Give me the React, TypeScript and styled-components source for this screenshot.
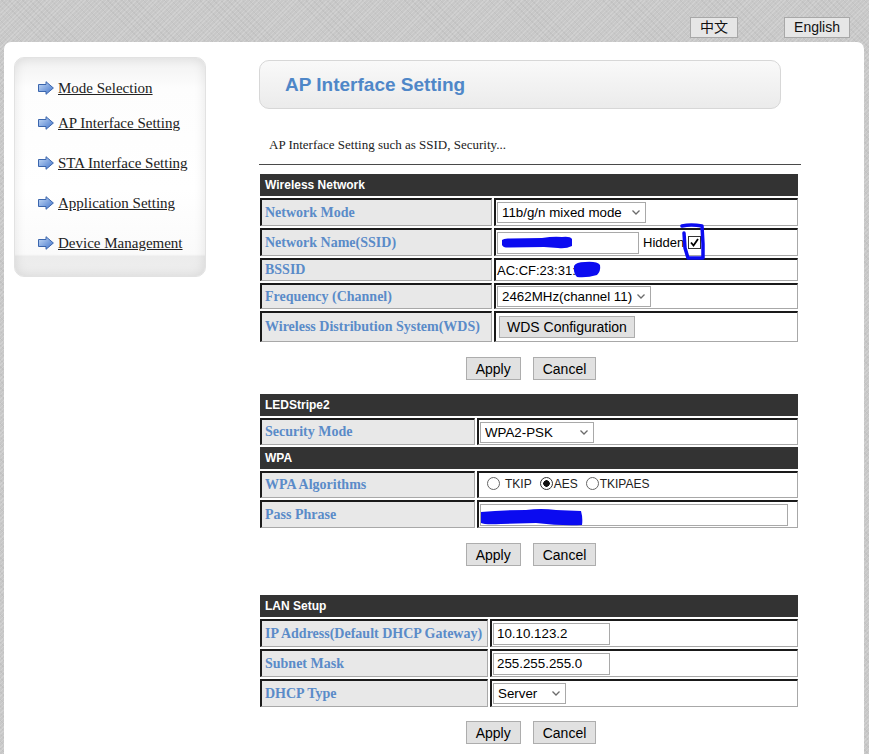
import React from "react";
import styled, { createGlobalStyle } from "styled-components";

const GlobalStyle = createGlobalStyle`
  html, body {
    margin: 0;
    padding: 0;
  }
  body {
    background-color: #c8c8c8;
    background-image:
      repeating-linear-gradient(135deg, rgba(255, 255, 255, 0.16) 0 1px, transparent 1px 3px),
      repeating-linear-gradient(45deg, rgba(0, 0, 0, 0.035) 0 1px, transparent 1px 5px);
    font-family: "Liberation Sans", Arial, sans-serif;
  }
`;

const TopBar = styled.div`
  display: flex;
  justify-content: flex-end;
  gap: 46px;
  height: 21px;
  padding: 17px 19px 4px 0;
`;

const LangButton = styled.button`
  height: 21px;
  padding: 0 9px;
  border: 1px solid #a8a8a8;
  background: #e6e6e6;
  color: #111;
  font: 14px "Liberation Sans", "Noto Sans CJK SC", sans-serif;
  line-height: 19px;
`;

const Shell = styled.div`
  display: flex;
  align-items: flex-start;
  margin: 0 5px 0 4px;
  min-height: calc(100vh - 42px);
  background: #fff;
  border-radius: 7px 7px 0 0;
`;

const Sidebar = styled.nav`
  box-sizing: border-box;
  width: 192px;
  height: 220px;
  margin: 15px 0 0 10px;
  padding: 21px 0 0 23px;
  border: 1px solid #e2e2e2;
  border-radius: 10px;
  background: linear-gradient(#f1f1f1, #fdfdfd 14%, #ffffff 60%, #fafafa 90%, #ececec 91%, #eeeeee);
  box-shadow: inset 0 0 12px rgba(0, 0, 0, 0.1);
`;

const NavList = styled.ul`
  display: flex;
  flex-direction: column;
  gap: 22px;
  margin: 0;
  padding: 0;
  list-style: none;
`;

const NavItem = styled.li`
  display: flex;
  align-items: center;
  gap: 4px;
  height: 18px;

  &:first-child {
    margin-bottom: -5px;
  }
`;

const NavLink = styled.a`
  color: #222;
  font: 15px "Liberation Serif", "Times New Roman", serif;
  text-decoration: underline;
  white-space: nowrap;
`;

const Main = styled.main`
  width: 542px;
  margin-left: 53px;
  padding-bottom: 12px;
`;

const TitleBox = styled.div`
  box-sizing: border-box;
  display: flex;
  align-items: center;
  width: 522px;
  height: 49px;
  margin-top: 18px;
  padding-left: 25px;
  border: 1px solid #d7d7d7;
  border-radius: 10px;
  background: linear-gradient(#f9f9f9, #ebebeb);
`;

const Title = styled.h1`
  margin: 0;
  color: #4f87c8;
  font: bold 19px "Liberation Sans", Arial, sans-serif;
`;

const Description = styled.p`
  margin: 28px 0 0 10px;
  color: #222;
  font: 13px "Liberation Serif", "Times New Roman", serif;
  line-height: 16px;
`;

const Divider = styled.div`
  width: 542px;
  margin-top: 11px;
  border-top: 1px solid #4a4a4a;
`;

const FormTable = styled.table<{ $top: number }>`
  width: 542px;
  margin: ${(p) => p.$top}px 0 0 -1px;
  border-collapse: separate;
  border-spacing: 2px;
`;

const Row = styled.tr<{ $h: number }>`
  height: ${(p) => p.$h}px;
`;

const HeadCell = styled.td`
  height: 22px;
  padding: 0 5px;
  background: #333;
  color: #fff;
  font: bold 12px "Liberation Sans", Arial, sans-serif;
`;

const LabelCell = styled.td<{ $w: number }>`
  box-sizing: border-box;
  width: ${(p) => p.$w}px;
  padding: 0 3px;
  border-style: solid;
  border-width: 2px 1px 1px 2px;
  border-color: #1a1a1a #a8a8a8 #a8a8a8 #1a1a1a;
  background: #e8e8e8;
  color: #5a8bc8;
  font: bold 14px "Liberation Serif", "Times New Roman", serif;
  white-space: nowrap;
`;

const ValueCell = styled.td`
  box-sizing: border-box;
  padding: 0 3px 0 1px;
  border-style: solid;
  border-width: 2px 1px 1px 2px;
  border-color: #1a1a1a #a8a8a8 #a8a8a8 #1a1a1a;
  background: #fff;
  color: #000;
  font: 13px "Liberation Sans", Arial, sans-serif;
  vertical-align: middle;
`;

const Inline = styled.div`
  display: flex;
  align-items: center;
  gap: 4px;
`;

const Holder = styled.span`
  position: relative;
  display: inline-block;
  vertical-align: middle;
`;

const Select = styled.select<{ $w: number }>`
  appearance: none;
  box-sizing: border-box;
  width: ${(p) => p.$w}px;
  height: 21px;
  padding: 0 18px 0 4px;
  border: 1px solid #a9a9a9;
  border-radius: 0;
  background: #fff;
  color: #000;
  font: 13.333px "Liberation Sans", Arial, sans-serif;
`;

const Chevron = styled.svg`
  position: absolute;
  top: 8px;
  right: 6px;
  pointer-events: none;
`;

const TextInput = styled.input<{ $w: number }>`
  box-sizing: border-box;
  width: ${(p) => p.$w}px;
  height: 22px;
  padding: 0 3px;
  border: 1px solid #a9a9a9;
  background: #fff;
  color: #000;
  font: 13.333px "Liberation Sans", Arial, sans-serif;
`;

const CheckBox = styled.span`
  display: inline-flex;
  align-items: center;
  justify-content: center;
  box-sizing: border-box;
  width: 13px;
  height: 13px;
  border: 1px solid #333;
  background: #fff;
`;

const Radio = styled.input<{ $gap: number }>`
  appearance: none;
  box-sizing: border-box;
  width: 13px;
  height: 13px;
  margin: 0 ${(p) => p.$gap}px 0 0;
  border: 1px solid #666;
  border-radius: 50%;
  background: #fff;

  &:checked {
    background: radial-gradient(circle, #111 0 3px, #fff 3.5px);
    border-color: #333;
  }
`;

const RadioLabel = styled.label`
  display: inline-flex;
  align-items: center;
  margin-right: 8px;
  color: #222;
  font: 12px "Liberation Sans", Arial, sans-serif;

  &:first-child {
    margin-left: 7px;
  }
`;

const Scribble = styled.svg<{ $x: number; $y: number }>`
  position: absolute;
  left: ${(p) => p.$x}px;
  top: ${(p) => p.$y}px;
  overflow: visible;
  pointer-events: none;
`;

const Actions = styled.div<{ $top: number }>`
  display: flex;
  justify-content: center;
  gap: 12px;
  margin: ${(p) => p.$top}px 0 0 2px;
`;

const Button = styled.button`
  height: 23px;
  padding: 0 9px;
  border: 1px solid #adadad;
  background: #e1e1e1;
  color: #000;
  font: 14px "Liberation Sans", Arial, sans-serif;
`;

const WdsButton = styled(Button)`
  height: 22px;
  margin-left: 2px;
  padding: 0 7px;
`;

function Arrow() {
  return (
    <svg width="16" height="14" viewBox="0 0 16 14">
      <defs>
        <linearGradient id="navArrow" x1="0" y1="0" x2="1" y2="1">
          <stop offset="0" stopColor="#c7dcf7" />
          <stop offset="1" stopColor="#3f72c9" />
        </linearGradient>
      </defs>
      <path
        d="M0.5 3.5 H8 V0.7 L15.4 7 L8 13.3 V10.5 H0.5 Z"
        fill="url(#navArrow)"
        stroke="#3a65ad"
        strokeWidth="1"
        strokeLinejoin="round"
      />
    </svg>
  );
}

function Dropdown(props: { width: number; value: string }) {
  return (
    <Holder>
      <Select $w={props.width} defaultValue={props.value}>
        <option>{props.value}</option>
      </Select>
      <Chevron width="8" height="5" viewBox="0 0 8 5">
        <path d="M0.5 0.5 L4 4 L7.5 0.5" fill="none" stroke="#6b6b6b" strokeWidth="1.3" />
      </Chevron>
    </Holder>
  );
}

const navItems = [
  "Mode Selection",
  "AP Interface Setting",
  "STA Interface Setting",
  "Application Setting",
  "Device Management",
];

export default function App() {
  return (
    <>
      <GlobalStyle />
      <TopBar>
        <LangButton>中文</LangButton>
        <LangButton>English</LangButton>
      </TopBar>
      <Shell>
        <Sidebar>
          <NavList>
            {navItems.map((item) => (
              <NavItem key={item}>
                <Arrow />
                <NavLink href="#">{item}</NavLink>
              </NavItem>
            ))}
          </NavList>
        </Sidebar>

        <Main>
          <TitleBox>
            <Title>AP Interface Setting</Title>
          </TitleBox>
          <Description>AP Interface Setting such as SSID, Security...</Description>
          <Divider />

          <FormTable $top={7}>
            <tbody>
              <tr>
                <HeadCell colSpan={2}>Wireless Network</HeadCell>
              </tr>
              <Row $h={28}>
                <LabelCell $w={232}>Network Mode</LabelCell>
                <ValueCell>
                  <Dropdown width={149} value="11b/g/n mixed mode" />
                </ValueCell>
              </Row>
              <Row $h={28}>
                <LabelCell $w={232}>Network Name(SSID)</LabelCell>
                <ValueCell>
                  <Inline>
                    <Holder>
                      <TextInput $w={142} defaultValue="" />
                      <Scribble $x={5} $y={4} width="70" height="13" viewBox="0 0 70 13">
                        <path
                          d="M0 4 Q2 2 8 2.5 L40 2 Q52 0 60 1 Q68 0 70 3 L70 10 Q64 13 56 12 L42 11 L8 11.5 Q1 12 0 9 Z"
                          fill="#0b0bf0"
                        />
                      </Scribble>
                    </Holder>
                    <span>Hidden</span>
                    <Holder>
                      <CheckBox>
                        <svg width="9" height="9" viewBox="0 0 9 9">
                          <path d="M1 4.5 L3.5 7.5 L8 1" fill="none" stroke="#000" strokeWidth="1.8" />
                        </svg>
                      </CheckBox>
                      <Scribble $x={-7} $y={-11} width="24" height="36" viewBox="0 0 24 36">
                        <path
                          d="M1 2 Q10 0 21 2 L22 20 L22 34 L7 34 L4 24 L3 9"
                          fill="none"
                          stroke="#0b0bf0"
                          strokeWidth="3.5"
                          strokeLinecap="round"
                          strokeLinejoin="round"
                        />
                      </Scribble>
                    </Holder>
                  </Inline>
                </ValueCell>
              </Row>
              <Row $h={23}>
                <LabelCell $w={232}>BSSID</LabelCell>
                <ValueCell>
                  <Holder>
                    AC:CF:23:31:
                    <Scribble $x={76} $y={-2} width="28" height="17" viewBox="0 0 28 17">
                      <path
                        d="M1 5 Q3 1 12 1 Q24 0 27 4 Q28 10 24 14 Q14 17 4 16 Q0 12 1 5 Z"
                        fill="#0b0bf0"
                      />
                    </Scribble>
                  </Holder>
                </ValueCell>
              </Row>
              <Row $h={26}>
                <LabelCell $w={232}>Frequency (Channel)</LabelCell>
                <ValueCell>
                  <Dropdown width={154} value="2462MHz(channel 11)" />
                </ValueCell>
              </Row>
              <Row $h={31}>
                <LabelCell $w={232}>Wireless Distribution System(WDS)</LabelCell>
                <ValueCell>
                  <WdsButton>WDS Configuration</WdsButton>
                </ValueCell>
              </Row>
            </tbody>
          </FormTable>

          <Actions $top={13}>
            <Button>Apply</Button>
            <Button>Cancel</Button>
          </Actions>

          <FormTable $top={12}>
            <tbody>
              <tr>
                <HeadCell colSpan={2}>LEDStripe2</HeadCell>
              </tr>
              <Row $h={27}>
                <LabelCell $w={215}>Security Mode</LabelCell>
                <ValueCell>
                  <Dropdown width={114} value="WPA2-PSK" />
                </ValueCell>
              </Row>
              <tr>
                <HeadCell colSpan={2}>WPA</HeadCell>
              </tr>
              <Row $h={27}>
                <LabelCell $w={215}>WPA Algorithms</LabelCell>
                <ValueCell>
                  <RadioLabel>
                    <Radio type="radio" name="algo" $gap={5} />
                    TKIP
                  </RadioLabel>
                  <RadioLabel>
                    <Radio type="radio" name="algo" $gap={1} defaultChecked />
                    AES
                  </RadioLabel>
                  <RadioLabel>
                    <Radio type="radio" name="algo" $gap={1} />
                    TKIPAES
                  </RadioLabel>
                </ValueCell>
              </Row>
              <Row $h={28}>
                <LabelCell $w={215}>Pass Phrase</LabelCell>
                <ValueCell>
                  <Holder>
                    <TextInput $w={308} defaultValue="" />
                    <Scribble $x={1} $y={5} width="102" height="17" viewBox="0 0 102 17">
                      <path
                        d="M0 3 Q20 1 45 1 Q60 -1 75 1 L100 2 Q102 9 101 16 Q80 17 55 14 L20 15 Q4 16 0 14 Z"
                        fill="#0b0bf0"
                      />
                    </Scribble>
                  </Holder>
                </ValueCell>
              </Row>
            </tbody>
          </FormTable>

          <Actions $top={13}>
            <Button>Apply</Button>
            <Button>Cancel</Button>
          </Actions>

          <FormTable $top={27}>
            <tbody>
              <tr>
                <HeadCell colSpan={2}>LAN Setup</HeadCell>
              </tr>
              <Row $h={28}>
                <LabelCell $w={228}>IP Address(Default DHCP Gateway)</LabelCell>
                <ValueCell>
                  <TextInput $w={117} defaultValue="10.10.123.2" />
                </ValueCell>
              </Row>
              <Row $h={28}>
                <LabelCell $w={228}>Subnet Mask</LabelCell>
                <ValueCell>
                  <TextInput $w={117} defaultValue="255.255.255.0" />
                </ValueCell>
              </Row>
              <Row $h={28}>
                <LabelCell $w={228}>DHCP Type</LabelCell>
                <ValueCell>
                  <Dropdown width={73} value="Server" />
                </ValueCell>
              </Row>
            </tbody>
          </FormTable>

          <Actions $top={12}>
            <Button>Apply</Button>
            <Button>Cancel</Button>
          </Actions>
        </Main>
      </Shell>
    </>
  );
}
